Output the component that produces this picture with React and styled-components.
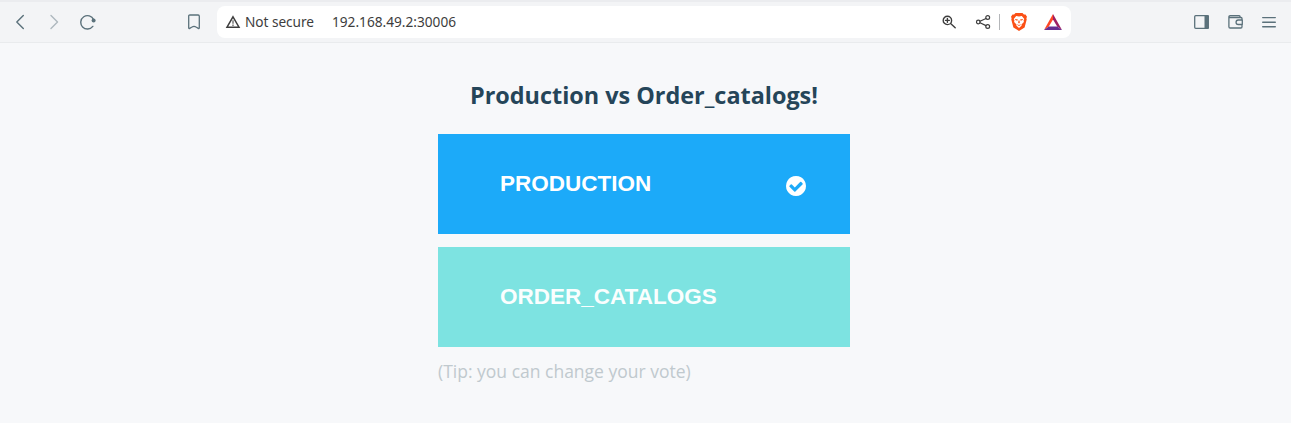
import React from "react";
import styled, { createGlobalStyle } from "styled-components";

const GlobalStyle = createGlobalStyle`
  * { box-sizing: border-box; }
  body { margin: 0; background: #f7f8fa; overflow: hidden; }
`;

const Window = styled.div`
  height: 423px;
  background: #f7f8fa;
`;

const Toolbar = styled.header`
  display: flex;
  align-items: center;
  height: 43px;
  padding: 1px 12px 2px;
  background: #f3f4f6;
  border-top: 2px solid #ebecef;
  border-bottom: 1px solid #e9ebed;
  color: #5b717b;
`;

const NavGroup = styled.nav`
  display: flex;
  align-items: center;
  gap: 18px;
  width: 174px;
`;

const IconButton = styled.button`
  display: flex;
  flex: none;
  width: 16px;
  height: 16px;
  padding: 0;
  border: 0;
  background: none;
  color: inherit;
  opacity: ${(p) => (p.$dim ? 0.45 : 1)};
`;

const AddressBar = styled.div`
  display: flex;
  align-items: center;
  width: 854px;
  height: 32px;
  margin-left: 15px;
  padding: 0 9px 0 8px;
  border-radius: 8px;
  background: #fff;
  color: #3d3d3d;
  font: 13.67px/20px "Noto Sans", "Open Sans", sans-serif;
`;

const Security = styled.span`
  width: 87px;
  margin-left: 4px;
  letter-spacing: -0.05px;
`;

const Url = styled.span`
  flex: 1;
`;

const BarActions = styled.div`
  display: flex;
  align-items: center;
`;

const Action = styled.span`
  display: flex;
  margin-left: ${(p) => p.$gap || 0}px;
`;

const Separator = styled.i`
  width: 1px;
  height: 16px;
  margin-left: 8px;
  background: #b4b6b9;
`;

const WindowActions = styled.div`
  display: flex;
  gap: 18px;
  margin-left: auto;
  margin-right: 2px;
`;

const Main = styled.main`
  width: 412px;
  margin: 0 0 0 438px;
  padding-top: 36px;
  font-family: "Open Sans", sans-serif;
`;

const Title = styled.h1`
  margin: 0 0 22px;
  color: #254559;
  font-size: 23.4px;
  line-height: 33px;
  font-weight: 700;
  text-align: center;
  white-space: nowrap;
`;

const Choice = styled.button`
  display: flex;
  align-items: center;
  justify-content: space-between;
  width: 100%;
  height: 100px;
  margin: 0 0 13px;
  padding: 0 44px 0 62px;
  border: 0;
  background: ${(p) => p.$color};
  color: ${(p) => (p.$selected ? "#fff" : "#fafefe")};
  font: 700 22.5px/26px "Liberation Sans", Arial, sans-serif;
  text-transform: uppercase;
`;

const CheckIcon = styled.svg`
  width: 20px;
  height: 20px;
  margin-top: 4px;
`;

const Tip = styled.p`
  margin: -1px 0 0;
  color: #c0c9ce;
  font-size: 17.5px;
  line-height: 24px;
`;

const Glyph = ({ size = 16, width = 1.3, children }) => (
  <svg width={size} height={size} viewBox="0 0 16 16" fill="none" stroke="currentColor"
    strokeWidth={width} strokeLinecap="round" strokeLinejoin="round">{children}</svg>
);

export default function App() {
  return (
    <Window>
      <GlobalStyle />
      <Toolbar>
        <NavGroup>
          <IconButton aria-label="Back"><Glyph width={1.4}><path d="M11.3 1.6 4.8 8l6.5 6.4" /></Glyph></IconButton>
          <IconButton aria-label="Forward" $dim><Glyph width={1.4}><path d="m5 1.6 6.5 6.4L5 14.4" /></Glyph></IconButton>
          <IconButton aria-label="Reload">
            <Glyph width={1.4}><path d="M12.8 12.4A6.7 6.7 0 1 1 13.6 5.6" /><circle cx="13.6" cy="6.4" r="2" fill="currentColor" stroke="none" /></Glyph>
          </IconButton>
        </NavGroup>
        <IconButton aria-label="Bookmark"><Glyph><path d="M2.7 2.2q0-1.2 1.2-1.2h8.2q1.2 0 1.2 1.2v11.6q0 1.2-1 .6L10 13q-2-1.4-4 0l-2.3 1.4q-1 .6-1-.6Z" /></Glyph></IconButton>
        <AddressBar>
          <Glyph width={1.5}><path strokeLinejoin="miter" d="M8 2.8 14 13.2H2Z" /><path strokeLinecap="butt" strokeOpacity="0.7" d="M8 6.3v3.5M8 10.5v1.4" /></Glyph>
          <Security>Not secure</Security>
          <Url>192.168.49.2:30006</Url>
          <BarActions>
            <Action><Glyph width={1.4}><circle cx="6.4" cy="6.4" r="4.2" /><path d="m9.6 9.6 4.6 4.2M4.5 6.4h3.8M6.4 4.5v3.8" /></Glyph></Action>
            <Action $gap={18}><Glyph width={1.2}><circle cx="3.3" cy="8" r="1.8" /><circle cx="12.7" cy="3.5" r="1.9" /><circle cx="12.7" cy="12.5" r="1.9" /><path d="m5 7.2 6-2.7M5 8.8l6 2.8" /></Glyph></Action>
            <Separator />
            <Action $gap={11}>
              <svg width="16" height="18" viewBox="0 0 16 18">
                <path fill="#fb5016" d="M4.5 0h7l1.4 1.6 1.6-.2L16 3.7l-.6 1.6.3 1.3-2.1 7.8L8 18l-5.6-3.6L.3 6.6l.3-1.3L0 3.7l1.5-2.3 1.6.2Z" />
                <path fill="#fff" d="M5.2 3 8 3.5l2.8-.5 2.5 3-.7 1.3.3 1.8-2.4 2.4.2 1.1L8 15l-2.7-2.4.2-1.1-2.4-2.4.3-1.8L2.7 6Z" />
                <path fill="#fb5016" d="m4 6.1 3 .4-.8 1.3-1.8-.7Zm8 0-3 .4.8 1.3 1.8-.7ZM7.5 7.5h1l.3 2.3L8 10.4l-.8-.6ZM5.9 11.2 8 12l2.1-.8-.6.9-1.5.9-1.5-.9Z" />
              </svg>
            </Action>
            <Action $gap={17}>
              <svg width="18" height="16" viewBox="0 0 18 16">
                <path fill="#ff4724" d="M9 0v5.6L4.8 12.5 0 16Z" />
                <path fill="#9e1f63" d="m9 0 9 16-4.8-3.5L9 5.6Z" />
                <path fill="#662d91" d="M0 16l4.8-3.5h8.4L18 16Z" />
              </svg>
            </Action>
          </BarActions>
        </AddressBar>
        <WindowActions>
          <IconButton aria-label="Sidebar"><Glyph><rect x="1.7" y="1.7" width="14" height="12.6" rx="1" /><path fill="currentColor" stroke="none" d="M11.5 1.7h4v12.6h-4Z" /></Glyph></IconButton>
          <IconButton aria-label="Wallet"><Glyph width={1.3}><path d="M15 6V4.5q0-1-1-1H1.9m0-.9v10.2q0 1.2 1.2 1.2h10.7q1.2 0 1.2-1.2V11M1.9 2.8q0-1.1 1.2-1.1h9q1 0 1 1.1M15.3 6h-4a2.2 2.2 0 0 0 0 4.5h4Z" /></Glyph></IconButton>
          <IconButton aria-label="Menu"><Glyph width={1.4}><path d="M1.7 3.6h12.6M1.7 8.2h12.6M1.7 12.8h12.6" /></Glyph></IconButton>
        </WindowActions>
      </Toolbar>
      <Main>
        <Title>Production vs Order_catalogs!</Title>
        <Choice $color="#1caaf9" $selected>
          Production
          <CheckIcon viewBox="128 128 1536 1536" fill="currentColor">
            <path d="M1412 734q0-28-18-46l-91-90q-19-19-45-19t-45 19l-408 407-226-226q-19-19-45-19t-45 19l-91 90q-18 18-18 46 0 27 18 45l362 362q19 19 45 19 27 0 46-19l543-543q18-18 18-45zm252 162q0 209-103 385.5t-279.5 279.5-385.5 103-385.5-103-279.5-279.5-103-385.5 103-385.5 279.5-279.5 385.5-103 385.5 103 279.5 279.5 103 385.5z" />
          </CheckIcon>
        </Choice>
        <Choice $color="#7de3e1">Order_catalogs</Choice>
        <Tip>(Tip: you can change your vote)</Tip>
      </Main>
    </Window>
  );
}
